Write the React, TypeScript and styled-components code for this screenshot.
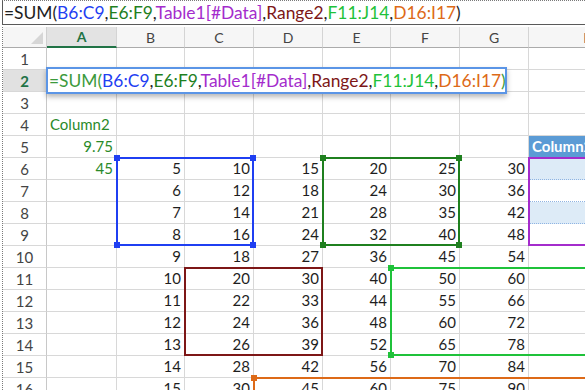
import React from 'react';
import styled, { createGlobalStyle } from 'styled-components';

const GlobalStyle = createGlobalStyle`
	html, body {
		margin: 0;
		padding: 0;
		background: #ffffff;
		overflow: hidden;
	}
	body {
		font-family: Lato, 'Noto Sans', sans-serif;
	}
`;

const Page = styled.div`
	width: 585px;
	height: 390px;
	overflow: hidden;
	padding-left: 2px;
	box-sizing: border-box;
	display: flex;
	flex-direction: column;
	gap: 2px;
`;

const FormulaBar = styled.div`
	height: 25px;
	flex: none;
	box-sizing: border-box;
	border-top: 1px dotted #7a7a7a;
	border-left: 1px solid #5a5a5a;
	border-bottom: 1px solid #5a5a5a;
	display: flex;
	align-items: center;
	padding-left: 1px;
	white-space: nowrap;
`;

const Formula = styled.span`
	font-size: 17.4px;
	line-height: 22px;
	color: #1e1e1e;
`;

const Ref = styled.span<{ $color: string }>`
	color: ${({ $color }) => $color};
`;

const Sheet = styled.div`
	flex: 1;
	display: grid;
	grid-template-columns: 44px 70px 68px 69px 69px 68px 69px 69px 120px;
	grid-template-rows: 21px repeat(17, 22px);
	border-left: 1px dotted #7a7a7a;
`;

const Corner = styled.div`
	grid-row: 1;
	grid-column: 1;
	background: #f6f6f6;
	border-right: 1px solid #d0d0d0;
	border-bottom: 1px solid #ababab;
	box-sizing: border-box;
	position: relative;

	&::after {
		content: '';
		position: absolute;
		right: 3px;
		bottom: 3px;
		width: 0;
		height: 0;
		border-left: 12px solid transparent;
		border-bottom: 12px solid #d6d6d6;
	}
`;

const ColHeader = styled.div<{ $col: number; $selected?: boolean }>`
	grid-row: 1;
	grid-column: ${({ $col }) => $col};
	background: ${({ $selected }) => ($selected ? '#e3e3e3' : '#f6f6f6')};
	border-right: 1px solid #d4d4d4;
	border-bottom: ${({ $selected }) =>
		$selected ? '2px solid #217346' : '1px solid #ababab'};
	box-sizing: border-box;
	display: flex;
	align-items: center;
	justify-content: center;
	font-size: 14px;
	color: ${({ $selected }) => ($selected ? '#217346' : '#444444')};
	font-weight: ${({ $selected }) => ($selected ? 700 : 400)};
`;

const RowHeader = styled.div<{ $row: number; $selected?: boolean }>`
	grid-row: ${({ $row }) => $row};
	grid-column: 1;
	background: ${({ $selected }) => ($selected ? '#e1e1e1' : '#ffffff')};
	border-right: 1px solid #c8c8c8;
	border-bottom: 1px solid #d8d8d8;
	box-sizing: border-box;
	display: flex;
	align-items: center;
	justify-content: center;
	font-size: 15px;
	color: ${({ $selected }) => ($selected ? '#217346' : '#444444')};
	font-weight: ${({ $selected }) => ($selected ? 700 : 400)};
`;

const Cell = styled.div<{
	$row: number;
	$col: number;
	$right?: boolean;
	$color?: string;
	$bg?: string;
	$band?: boolean;
}>`
	grid-row: ${({ $row }) => $row};
	grid-column: ${({ $col }) => $col};
	box-sizing: border-box;
	border-right: 1px solid #d8d8d8;
	border-bottom: ${({ $band }) => ($band ? '1px dotted #8fb4e3' : '1px solid #d8d8d8')};
	background: ${({ $bg }) => $bg || '#ffffff'};
	display: flex;
	align-items: flex-end;
	justify-content: ${({ $right }) => ($right ? 'flex-end' : 'flex-start')};
	padding: 0 3px 2px 3px;
	font-size: 15px;
	line-height: 17px;
	color: ${({ $color }) => $color || '#1e1e1e'};
	white-space: nowrap;
	overflow: hidden;
`;

const TableHead = styled(Cell)`
	background: #5b9bd5;
	color: #ffffff;
	font-weight: 700;
	border-bottom: 1px solid #5b9bd5;
`;

const RangeBox = styled.div<{ $rows: string; $cols: string; $color: string }>`
	grid-row: ${({ $rows }) => $rows};
	grid-column: ${({ $cols }) => $cols};
	border: 2px solid ${({ $color }) => $color};
	margin: -1px 0 0 -1px;
	position: relative;
	z-index: 2;
	pointer-events: none;
`;

const Handle = styled.span<{ $color: string; $x: 'left' | 'right'; $y: 'top' | 'bottom' }>`
	position: absolute;
	width: 6px;
	height: 6px;
	background: ${({ $color }) => $color};
	${({ $x }) => $x}: -4px;
	${({ $y }) => $y}: -4px;
`;

const Editor = styled.div`
	grid-row: 3;
	grid-column: 2 / span 7;
	width: 461px;
	height: 27px;
	margin: -3px 0 0 -1px;
	box-sizing: border-box;
	background: #ffffff;
	border: 2px solid #5b95e6;
	box-shadow: 0 3px 5px rgba(0, 0, 0, 0.28);
	display: flex;
	align-items: center;
	padding-left: 1px;
	white-space: nowrap;
	z-index: 5;
`;

const BLUE = '#1f3ff2';
const DKGREEN = '#1f801f';
const PURPLE = '#a42ccc';
const DKRED = '#7d1717';
const LTGREEN = '#1fc23a';
const ORANGE = '#dd6a18';
const TXTGREEN = '#2a8a2a';

const parts: { t: string; c: string }[] = [
	{ t: 'B6:C9', c: BLUE },
	{ t: ',', c: '#1e1e1e' },
	{ t: 'E6:F9', c: DKGREEN },
	{ t: ',', c: '#1e1e1e' },
	{ t: 'Table1[#Data]', c: PURPLE },
	{ t: ',', c: '#1e1e1e' },
	{ t: 'Range2', c: DKRED },
	{ t: ',', c: '#1e1e1e' },
	{ t: 'F11:J14', c: LTGREEN },
	{ t: ',', c: '#1e1e1e' },
	{ t: 'D16:I17', c: ORANGE },
];

const columns = ['A', 'B', 'C', 'D', 'E', 'F', 'G', 'H'];

const ranges = [
	{ rows: '7 / 11', cols: '3 / 5', color: BLUE, handles: 4 },
	{ rows: '7 / 11', cols: '6 / 8', color: DKGREEN, handles: 4 },
	{ rows: '12 / 16', cols: '4 / 6', color: DKRED, handles: 0 },
	{ rows: '7 / 11', cols: '9 / 10', color: PURPLE, handles: 0 },
	{ rows: '12 / 16', cols: '7 / 10', color: LTGREEN, handles: 2 },
	{ rows: '17 / 19', cols: '5 / 10', color: ORANGE, handles: 1 },
];

// row: sheet row number (1..17), col: 0 = A ... 7 = H
const cellFor = (row: number, col: number) => {
	const at = { $row: row + 1, $col: col + 2 };
	if (col === 0) {
		if (row === 4)
			return (
				<Cell key={col} {...at} $color={TXTGREEN}>
					Column2
				</Cell>
			);
		if (row === 5)
			return (
				<Cell key={col} {...at} $right $color={TXTGREEN}>
					9.75
				</Cell>
			);
		if (row === 6)
			return (
				<Cell key={col} {...at} $right $color={TXTGREEN}>
					45
				</Cell>
			);
		return <Cell key={col} {...at} />;
	}
	if (col === 7) {
		if (row === 5)
			return (
				<TableHead key={col} {...at}>
					Column2
				</TableHead>
			);
		if (row >= 6 && row <= 9) {
			const banded = row === 6 || row === 8;
			return <Cell key={col} {...at} $bg={banded ? '#ddebf7' : '#ffffff'} $band />;
		}
		return <Cell key={col} {...at} />;
	}
	if (row >= 6) {
		return (
			<Cell key={col} {...at} $right>
				{(row - 1) * col}
			</Cell>
		);
	}
	return <Cell key={col} {...at} />;
};

const App: React.FC = () => {
	const rows = Array.from({ length: 17 }, (_, i) => i + 1);

	return (
		<>
			<GlobalStyle />
			<Page>
				<FormulaBar>
					<Formula>
						=SUM(
						{parts.map((p, i) => (
							<Ref key={i} $color={p.c}>
								{p.t}
							</Ref>
						))}
						)
					</Formula>
				</FormulaBar>
				<Sheet>
					<Corner />
					{columns.map((c, i) => (
						<ColHeader key={c} $col={i + 2} $selected={c === 'A'}>
							{c}
						</ColHeader>
					))}
					{rows.map((r) => (
						<React.Fragment key={r}>
							<RowHeader $row={r + 1} $selected={r === 2}>
								{r}
							</RowHeader>
							{columns.map((_, ci) => cellFor(r, ci))}
						</React.Fragment>
					))}
					<Editor>
						<Formula>
							<Ref $color="#3c9a3c">=SUM(</Ref>
							{parts.map((p, i) => (
								<Ref key={i} $color={p.c}>
									{p.t}
								</Ref>
							))}
							<Ref $color="#3c9a3c">)</Ref>
						</Formula>
					</Editor>
					{ranges.map((g, i) => (
						<RangeBox key={i} $rows={g.rows} $cols={g.cols} $color={g.color}>
							{g.handles >= 1 && <Handle $color={g.color} $x="left" $y="top" />}
							{g.handles >= 2 && <Handle $color={g.color} $x="left" $y="bottom" />}
							{g.handles >= 4 && <Handle $color={g.color} $x="right" $y="top" />}
							{g.handles >= 4 && <Handle $color={g.color} $x="right" $y="bottom" />}
						</RangeBox>
					))}
				</Sheet>
			</Page>
		</>
	);
};

export default App;
